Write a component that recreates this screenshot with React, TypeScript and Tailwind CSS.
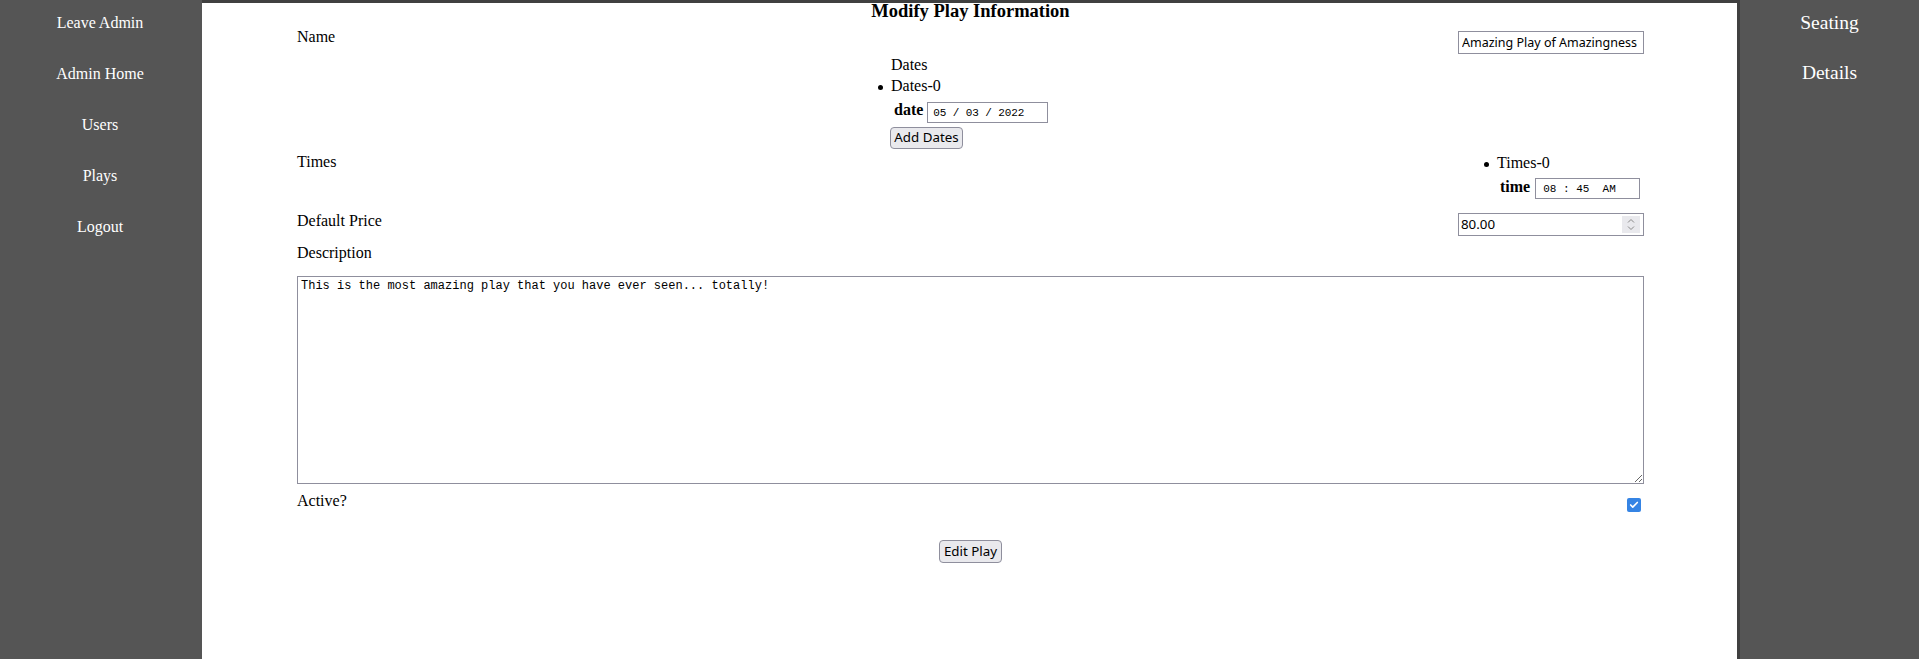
import { Check } from "lucide-react";

const navLeft = ["Leave Admin", "Admin Home", "Users", "Plays", "Logout"];
const navRight = ["Seating", "Details"];

const ctrl = "border border-[#8f8f9d] bg-white text-black outline-none";
const btn =
  "flex items-center justify-center rounded-[4px] border border-[#8f8f9d] bg-[#e9e9ed] text-[13.33px] text-black font-['Noto_Sans',sans-serif]";

const SideNav = ({ items, big }: { items: string[]; big?: boolean }) => (
  <div
    className={
      big
        ? "flex flex-col items-center pt-[12px] gap-[28px]"
        : "flex flex-col items-center pr-[2px] pt-[14px] gap-[33px]"
    }
  >
    {items.map((it) => (
      <a
        key={it}
        href="#"
        className={big ? "text-[19.5px] leading-[22px] text-white" : "text-[16px] leading-[18px] text-white"}
      >
        {it}
      </a>
    ))}
  </div>
);

const Bullet = () => (
  <span className="absolute left-[-13px] top-[8px] h-[5px] w-[5px] rounded-full bg-black" />
);

export default function App() {
  return (
    <div className="flex min-h-screen w-full bg-[#555555] font-['Liberation_Serif',serif] text-black">
      <div className="w-[202px] shrink-0">
        <SideNav items={navLeft} />
      </div>

      <div className="w-[1538px] shrink-0 border-t-[3px] border-r-[3px] border-[#404040] bg-white">
        <div className="ml-[95px] flex w-[1347px] flex-col">
          <h3 className="-mt-[3px] h-[22px] text-center text-[18.5px] font-bold leading-[22px]">
            Modify Play Information
          </h3>

          {/* Name */}
          <div className="mt-[6px] flex items-start justify-between">
            <span className="text-[16px] leading-[18px]">Name</span>
            <input
              readOnly
              defaultValue="Amazing Play of Amazingness"
              className={`${ctrl} mt-[3px] h-[23px] w-[186px] px-[3px] font-['Noto_Sans',sans-serif] text-[12.5px]`}
            />
          </div>

          {/* Dates */}
          <div className="ml-[554px] mt-[2px] flex flex-col">
            <div className="pl-[40px] text-[16px] leading-[18px]">Dates</div>
            <ul className="mt-[3px] pl-[40px]">
              <li className="relative">
                <Bullet />
                <div className="text-[16px] leading-[18px]">Dates-0</div>
                <div className="mt-[7px] flex items-start pl-[3px]">
                  <span className="-mt-[1px] text-[16px] font-bold leading-[18px]">date</span>
                  <input
                    readOnly
                    defaultValue="05 / 03 / 2022"
                    className={`${ctrl} ml-[4px] h-[21px] w-[121px] pl-[5px] font-['Liberation_Mono',monospace] text-[11px] tracking-[-0.1px]`}
                  />
                </div>
              </li>
            </ul>
            <button className={`${btn} ml-[39px] mt-[4px] h-[22px] w-[73px]`}>Add Dates</button>
          </div>

          {/* Times */}
          <div className="mt-[4px] flex items-start justify-between">
            <span className="text-[16px] leading-[18px]">Times</span>
            <ul className="mt-[1px] w-[186px] pl-[39px]">
              <li className="relative">
                <Bullet />
                <div className="text-[16px] leading-[18px]">Times-0</div>
                <div className="mt-[6px] flex items-start pl-[3px]">
                  <span className="text-[16px] font-bold leading-[18px]">time</span>
                  <input
                    readOnly
                    defaultValue="08 : 45  AM"
                    className={`${ctrl} ml-[5px] h-[21px] w-[105px] pl-[7px] font-['Liberation_Mono',monospace] text-[11px] whitespace-pre`}
                  />
                </div>
              </li>
            </ul>
          </div>

          {/* Default price */}
          <div className="mt-[13px] flex items-start justify-between">
            <span className="text-[16px] leading-[18px]">Default Price</span>
            <div className={`${ctrl} mt-[1px] flex h-[23px] w-[186px] items-center justify-between pl-[2px] pr-[3px]`}>
              <span className="font-['Noto_Sans',sans-serif] text-[13.33px]">80.00</span>
              <div className="flex h-[17px] w-[18px] flex-col items-center justify-center bg-[#e9e9ed]">
                <svg width="8" height="13" viewBox="0 0 8 13" fill="none" stroke="#8a8a8a" strokeWidth="1">
                  <path d="M1 4.5 L4 1.5 L7 4.5" />
                  <path d="M1 8.5 L4 11.5 L7 8.5" />
                </svg>
              </div>
            </div>
          </div>

          {/* Description */}
          <div className="mt-[8px] text-[16px] leading-[18px]">Description</div>
          <textarea
            readOnly
            defaultValue="This is the most amazing play that you have ever seen... totally!"
            className={`${ctrl} mt-[14px] h-[208px] w-[1347px] px-[3px] pt-[2px] font-['Liberation_Mono',monospace] text-[12px] leading-[15px]`}
          />

          {/* Active */}
          <div className="mt-[8px] flex items-start justify-between">
            <span className="text-[16px] leading-[18px]">Active?</span>
            <div className="mr-[3px] mt-[6px] flex h-[14px] w-[14px] items-center justify-center rounded-[2px] bg-[#3584e4]">
              <Check size={10} strokeWidth={4} className="text-white" />
            </div>
          </div>

          <div className="mt-[28px] flex justify-center">
            <button className={`${btn} h-[23px] w-[63px]`}>Edit Play</button>
          </div>
        </div>
      </div>

      <div className="flex-1">
        <SideNav items={navRight} big />
      </div>
    </div>
  );
}
